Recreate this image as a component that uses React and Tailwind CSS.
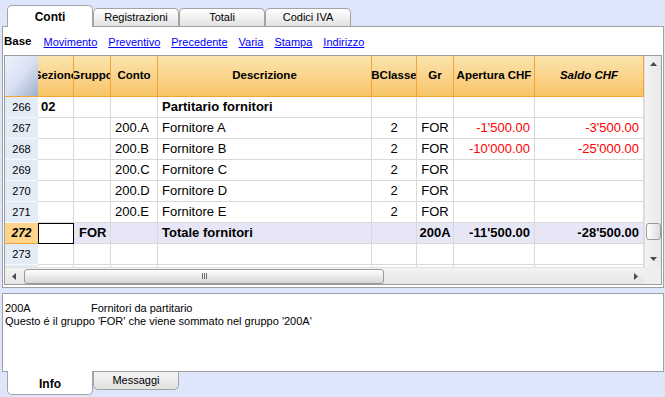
import React from 'react'

const COLS = [
  { key: 'sez', w: 'w-[36px]', label: 'Sezione', align: 'justify-start pl-[3px]' },
  { key: 'grp', w: 'w-[37px]', label: 'Gruppo', align: 'justify-start pl-[5px]' },
  { key: 'conto', w: 'w-[47px]', label: 'Conto', align: 'justify-start pl-[4px]' },
  { key: 'desc', w: 'w-[214px]', label: 'Descrizione', align: 'justify-start pl-[4px]' },
  { key: 'bc', w: 'w-[45px]', label: 'BClasse', align: 'justify-center' },
  { key: 'gr', w: 'w-[37px]', label: 'Gr', align: 'justify-center' },
  { key: 'ap', w: 'w-[81px]', label: 'Apertura CHF', align: 'justify-end pr-[4px]', red: true },
  { key: 'sa', w: 'w-[109px]', label: 'Saldo CHF', align: 'justify-end pr-[4px]', red: true, italic: true },
]

const ROWS = [
  { n: 266, sez: '02', desc: 'Partitario fornitori', bold: true },
  { n: 267, conto: '200.A', desc: 'Fornitore A', bc: '2', gr: 'FOR', ap: "-1'500.00", sa: "-3'500.00" },
  { n: 268, conto: '200.B', desc: 'Fornitore B', bc: '2', gr: 'FOR', ap: "-10'000.00", sa: "-25'000.00" },
  { n: 269, conto: '200.C', desc: 'Fornitore C', bc: '2', gr: 'FOR' },
  { n: 270, conto: '200.D', desc: 'Fornitore D', bc: '2', gr: 'FOR' },
  { n: 271, conto: '200.E', desc: 'Fornitore E', bc: '2', gr: 'FOR' },
  { n: 272, grp: 'FOR', desc: 'Totale fornitori', gr: '200A', ap: "-11'500.00", sa: "-28'500.00", total: true },
  { n: 273 },
  { n: '' },
]

const LINKS = ['Movimento', 'Preventivo', 'Precedente', 'Varia', 'Stampa', 'Indirizzo']

function Tri({ dir }) {
  const pts = {
    up: '0,4 3.5,0 7,4',
    down: '0,0 3.5,4 7,0',
    left: '4,0 0,3.5 4,7',
    right: '0,0 4,3.5 0,7',
  }[dir]
  const vert = dir === 'up' || dir === 'down'
  return (
    <svg width={vert ? 7 : 4} height={vert ? 4 : 7}>
      <polygon points={pts} fill="#4a4a4a" />
    </svg>
  )
}

function TopTab({ label, active }) {
  if (active) {
    return (
      <div className="w-[86px] h-[22px] bg-white border border-b-0 border-[#a3a3a3] rounded-t-[5px] flex items-center justify-center text-[12px] font-bold text-black">
        {label}
      </div>
    )
  }
  return (
    <div className="w-[86px] h-[18px] mb-px bg-linear-to-b from-white to-[#e2e2e2] border border-b-0 border-[#a3a3a3] rounded-t-[5px] flex items-center justify-center text-[11px] text-black">
      {label}
    </div>
  )
}

export default function App() {
  return (
    <div className="w-[665px] h-[397px] bg-[#dee6fb] overflow-hidden font-['Liberation_Sans',Arial,sans-serif] text-black">
      {/* Top tabs */}
      <div className="relative z-10 h-[27px] -mb-px flex items-end pl-[7px]">
        <TopTab label="Conti" active />
        <TopTab label="Registrazioni" />
        <TopTab label="Totali" />
        <TopTab label="Codici IVA" />
      </div>

      {/* Main panel */}
      <div className="ml-[2px] w-[662px] h-[262px] bg-white border border-[#a0a0a0]">
        <div className="h-[28px] flex items-center gap-[11px] pl-[1px] pt-[2px] text-[11px]">
          <span className="font-bold text-[11.5px] mr-[1px]">Base</span>
          {LINKS.map((l) => (
            <span key={l} className="text-[#0000ff] underline">{l}</span>
          ))}
        </div>

        {/* Grid */}
        <div className="ml-px w-[658px] h-[230px] border border-[#9c9c9c] flex flex-col">
          <div className="flex h-[211px]">
            <div className="w-[639px] flex flex-col overflow-hidden">
              {/* Header */}
              <div className="flex h-[41px] shrink-0 border-b border-[#f2a43a]">
                <div className="w-[33px] bg-linear-to-br from-[#eef2fd] via-[#d9e1f4] to-[#9fb0cb]" />
                {COLS.map((c) => (
                  <div
                    key={c.key}
                    className={`${c.w} shrink-0 overflow-hidden flex items-center justify-center border-r border-[#f2a43a] bg-linear-to-b from-[#fce4ae] to-[#f7c467] text-[11.5px] font-bold whitespace-nowrap ${c.italic ? 'italic' : ''}`}
                  >
                    {c.label}
                  </div>
                ))}
              </div>

              {/* Body */}
              {ROWS.map((r, i) => (
                <div
                  key={i}
                  className={`flex h-[21px] shrink-0 ${r.total ? 'bg-[#e6e6f6]' : 'bg-white'}`}
                >
                  <div
                    className={`w-[33px] shrink-0 flex items-center justify-center text-[11px] border-b ${
                      r.total
                        ? 'bg-[#fcd58b] border-[#f2a43a] font-bold italic text-[12px]'
                        : 'bg-[#e3ebf7] border-[#f4f7fc]'
                    }`}
                  >
                    {r.n}
                  </div>
                  {COLS.map((c) => {
                    const v = r[c.key]
                    const selected = r.total && c.key === 'sez'
                    const red = c.red && !r.total
                    return (
                      <div
                        key={c.key}
                        className={`${c.w} shrink-0 overflow-hidden flex items-center ${c.align} whitespace-nowrap text-[13px] ${
                          selected
                            ? 'bg-white border border-black'
                            : 'border-r border-b border-[#d9d9d9]'
                        } ${r.bold || r.total ? 'font-bold' : ''} ${red ? 'text-[#ff0000]' : ''}`}
                      >
                        {v}
                      </div>
                    )
                  })}
                </div>
              ))}
            </div>

            {/* Vertical scrollbar */}
            <div className="w-[17px] flex flex-col items-center bg-linear-to-r from-[#f3f3f3] to-[#e8e8e8] border-l border-[#e0e0e0]">
              <div className="h-[16px] flex items-center justify-center">
                <Tri dir="up" />
              </div>
              <div className="flex-1 w-full flex flex-col justify-end pb-[11px] pl-[1px]">
                <div className="h-[17px] w-full rounded-[3px] border border-[#9a9a9a] bg-linear-to-r from-white to-[#dcdcdc]" />
              </div>
              <div className="h-[16px] flex items-center justify-center">
                <Tri dir="down" />
              </div>
            </div>
          </div>

          {/* Horizontal scrollbar */}
          <div className="flex h-[17px]">
            <div className="w-[639px] flex items-center bg-linear-to-b from-[#f3f3f3] to-[#e6e6e6] border-t border-[#e0e0e0]">
              <div className="w-[18px] flex items-center justify-center">
                <Tri dir="left" />
              </div>
              <div className="w-[360px] h-[15px] ml-[1px] rounded-[3px] border border-[#9a9a9a] bg-linear-to-b from-white to-[#d6d6d6] flex items-center justify-center">
                <div className="flex gap-[1px]">
                  <div className="w-[1px] h-[6px] bg-[#6a6a6a]" />
                  <div className="w-[1px] h-[6px] bg-[#6a6a6a]" />
                  <div className="w-[1px] h-[6px] bg-[#6a6a6a]" />
                </div>
              </div>
              <div className="flex-1" />
              <div className="w-[16px] flex items-center justify-center">
                <Tri dir="right" />
              </div>
            </div>
            <div className="w-[17px] bg-[#eeeeee]" />
          </div>
        </div>
      </div>

      {/* Info panel */}
      <div className="mt-[5px] ml-[2px] w-[662px] h-[79px] bg-white border border-[#a0a0a0] pt-[8px] pl-[2px] text-[11px] leading-[13px]">
        <div className="flex">
          <span className="w-[86px]">200A</span>
          <span>Fornitori da partitario</span>
        </div>
        <div>Questo é il gruppo 'FOR' che viene sommato nel gruppo '200A'</div>
      </div>

      {/* Bottom tabs */}
      <div className="relative z-10 -mt-px flex items-start pl-[7px]">
        <div className="w-[86px] h-[24px] bg-white border border-t-0 border-[#a3a3a3] rounded-b-[5px] flex items-center justify-center pt-[3px] text-[12px] font-bold">
          Info
        </div>
        <div className="w-[86px] h-[18px] mt-px bg-linear-to-b from-[#f4f4f4] to-[#e2e2e2] border border-t-0 border-[#a3a3a3] rounded-b-[5px] flex items-center justify-center text-[11px]">
          Messaggi
        </div>
      </div>
    </div>
  )
}
